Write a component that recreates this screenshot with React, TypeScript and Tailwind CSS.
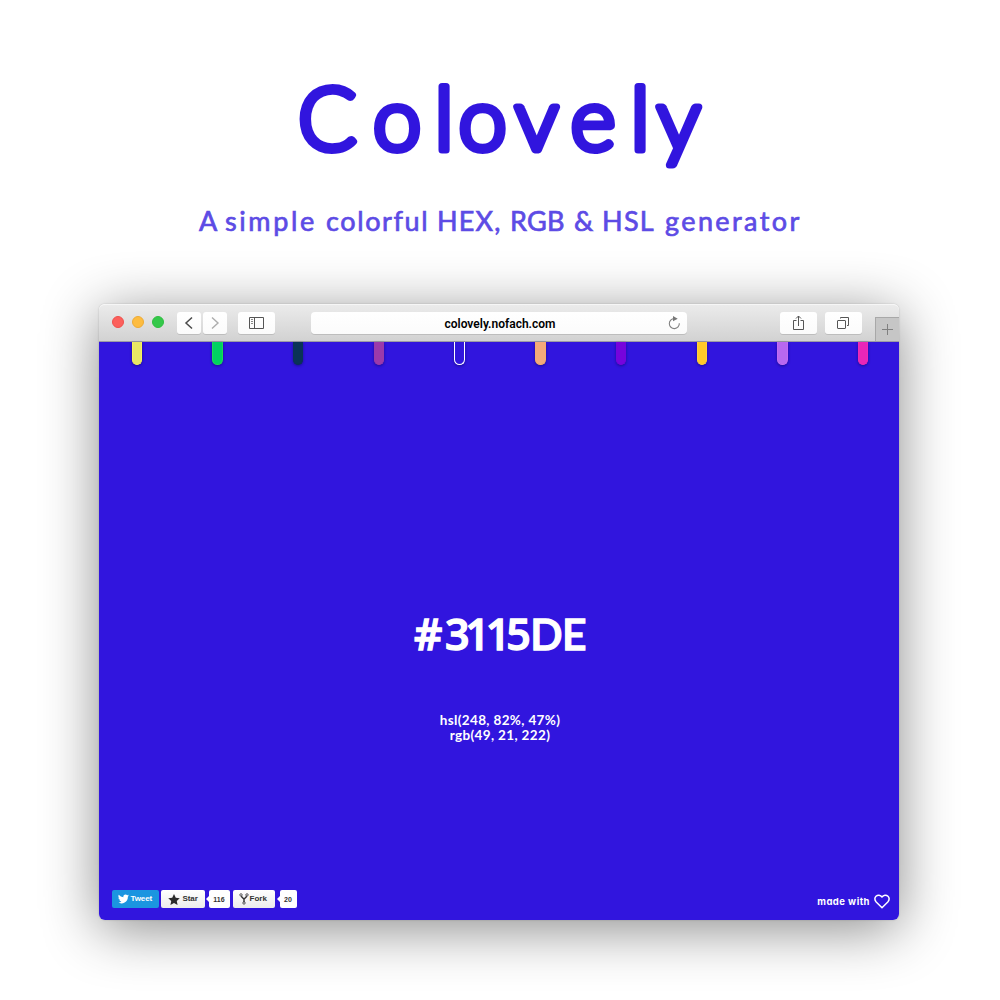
import React from "react";

const swatches = [
  "bg-[#e8e665] border-[#f5f35c]",
  "bg-[#00d261] border-[#1bdc55]",
  "bg-[#0a3357] border-[#0a3357]",
  "bg-[#9b3aaa] border-[#9b3aaa]",
  "bg-transparent border-white",
  "bg-[#f3a97c] border-[#f8ab6c]",
  "bg-[#7604dc] border-[#7604dc]",
  "bg-[#ffc928] border-[#ffcf3c]",
  "bg-[#b768f0] border-[#c36cf3]",
  "bg-[#e926b8] border-[#f02ab5]",
];

const tagline = [
  { word: "A", box: "w-[26px]", spacing: "tracking-[1px]" },
  { word: "simple", box: "w-[101px]", spacing: "tracking-[2.6px]" },
  { word: "colorful", box: "w-[111px]", spacing: "tracking-[1.6px]" },
  { word: "HEX,", box: "w-[73px]", spacing: "tracking-[1.2px]" },
  { word: "RGB", box: "w-[64px]", spacing: "tracking-[0.3px]" },
  { word: "&", box: "w-[28px]", spacing: "tracking-[0px]" },
  { word: "HSL", box: "w-[63px]", spacing: "tracking-[1.3px]" },
  { word: "generator", box: "w-[140px]", spacing: "tracking-[2.4px]" },
];

const button =
  "flex h-[22px] items-center justify-center rounded-[3px] bg-gradient-to-b from-white to-[#fbfbfb] shadow-[0_1px_0_#bdbdbd]";

function Wordmark() {
  return (
    <svg
      width="440"
      height="130"
      viewBox="280 55 440 130"
      role="img"
      aria-label="Colovely"
      className="overflow-visible"
      fill="#3115de"
      stroke="#3115de"
      strokeWidth="7"
      strokeLinejoin="round"
      strokeLinecap="round"
      fontFamily="Lato, sans-serif"
      fontWeight="300"
      fontSize="86.5"
    >
      <text y="149.5" x="298 373 434.5 458.5 515 570.5 630.5 657">
        Colovely
      </text>
    </svg>
  );
}

function Toolbar() {
  return (
    <div className="flex h-[38px] items-start rounded-t-[6px] border-b border-[#9c9ca4] border-t border-t-[#f6f6f6] bg-gradient-to-b from-[#ebebeb] to-[#d2d2d2] text-[#555]">
      <div className="ml-[13px] mt-[11px] flex gap-2">
        <span className="size-3 rounded-full border border-[#f0504c] bg-[#fc605c]" />
        <span className="size-3 rounded-full border border-[#eeab35] bg-[#fdbc40]" />
        <span className="size-3 rounded-full border border-[#2fbe40] bg-[#34c84a]" />
      </div>
      <div className="ml-[13px] mt-[7px] flex gap-[2px]">
        <div className={`${button} w-6`}>
          <svg width="10" height="14" viewBox="0 0 10 14" fill="none" stroke="#4a4a4a" strokeWidth="1.5">
            <path d="M8 1.5L2 7L8 12.5" />
          </svg>
        </div>
        <div className={`${button} w-6`}>
          <svg width="10" height="14" viewBox="0 0 10 14" fill="none" stroke="#adadad" strokeWidth="1.4">
            <path d="M2 1.5L8 7L2 12.5" />
          </svg>
        </div>
      </div>
      <div className={`${button} ml-[11px] mt-[7px] w-[37px]`}>
        <svg width="15" height="12" viewBox="0 0 15 12" fill="none" stroke="#555" className="mr-px">
          <path d="M.5.5h14v11H.5zM5.5.5v11" />
          <path d="M2 2.5h2M2 4.5h2M2 6.5h2" stroke="#888" />
        </svg>
      </div>
      <div className={`${button} relative ml-9 mt-[7px] w-[376px] rounded-[4px]`}>
        <span className="pl-[2px] pt-[2px] font-[Roboto,sans-serif] text-[12px] font-semibold leading-none text-black">
          colovely.nofach.com
        </span>
        <svg width="13" height="14" viewBox="0 0 13 14" fill="none" stroke="#828282" className="absolute right-[6px] top-[4px]">
          <path d="M6.3 2.6A5 5 0 1 0 11.3 7.2" strokeWidth="1.1" />
          <path d="M5 0L9.7 2.7L5 5.2z" fill="#777" stroke="none" />
        </svg>
      </div>
      <div className={`${button} ml-[93px] mt-[7px] w-[37px]`}>
        <svg width="11" height="16" viewBox="0 0 11 16" fill="none" stroke="#555" className="mb-px">
          <path d="M3.5 5.5h-3v9h10v-9h-3M5.5 11V1M3 3.5L5.5 1L8 3.5" />
        </svg>
      </div>
      <div className={`${button} ml-2 mt-[7px] w-[37px]`}>
        <svg width="12" height="12" viewBox="0 0 12 12" fill="none" stroke="#555" className="mr-px">
          <rect x=".5" y="3.5" width="8" height="8" rx=".5" />
          <path d="M3.5 1.5v-1h8v8h-1.5" />
        </svg>
      </div>
      <div className="ml-[13px] mt-3 flex h-6 flex-1 items-center justify-center border-l border-t border-[#a8a8a8] bg-[#c6c6c6]">
        <svg width="11" height="11" viewBox="0 0 11 11" stroke="#808080">
          <path d="M5.5 0v11M0 5.5h11" />
        </svg>
      </div>
    </div>
  );
}

function Count({ value, width }: { value: string; width: string }) {
  return (
    <div className={`relative flex h-[18px] items-center justify-center rounded-[2px] bg-white text-[7px] text-[#333] ${width}`}>
      <span className="absolute -left-[3px] top-[6px] border-y-[3px] border-r-[3px] border-y-transparent border-r-white" />
      {value}
    </div>
  );
}

function SocialButtons() {
  return (
    <div className="flex items-start font-['Liberation_Sans',sans-serif] text-[8px] font-bold leading-none text-[#333]">
      <div className="flex h-[18px] w-[47px] items-center rounded-[2px] bg-[#1b95e0] pl-[6px] text-white">
        <svg width="11" height="10" viewBox="0 0 24 20" fill="white" className="mr-[2px]">
          <path d="M24 2.4a9.8 9.8 0 0 1-2.8.8A5 5 0 0 0 23.3.5a10 10 0 0 1-3.1 1.2A4.9 4.9 0 0 0 11.8 6.2 14 14 0 0 1 1.7.9a4.9 4.9 0 0 0 1.5 6.6A4.9 4.9 0 0 1 1 6.9a4.9 4.9 0 0 0 4 4.9 5 5 0 0 1-2.2.1 4.9 4.9 0 0 0 4.6 3.4A9.9 9.9 0 0 1 0 17.3 14 14 0 0 0 21.5 4.9 10 10 0 0 0 24 2.4z" />
        </svg>
        <span className="tracking-[-0.1px]">Tweet</span>
      </div>
      <div className="ml-[2.5px] flex h-[18px] w-[43.5px] items-center rounded-[2px] bg-gradient-to-b from-white to-[#ececec] pl-[6.5px]">
        <svg width="12" height="11" viewBox="0 0 24 23" fill="#2b2b2b" className="mr-[3px]">
          <path d="M12 0l3.7 8 8.3.9-6.2 5.6L19.5 23 12 18.6 4.5 23l1.7-8.5L0 8.9 8.3 8z" />
        </svg>
        <span className="tracking-[-0.1px]">Star</span>
      </div>
      <div className="ml-[4px]">
        <Count value="116" width="w-[21px]" />
      </div>
      <div className="ml-[3px] flex h-[18px] w-[42px] items-center rounded-[2px] bg-gradient-to-b from-white to-[#ececec] pl-[6px]">
        <svg width="10" height="12" viewBox="0 0 10 12" fill="none" stroke="#333" className="mr-px">
          <circle cx="2" cy="1.9" r="1.2" strokeWidth=".8" />
          <circle cx="8" cy="1.9" r="1.2" strokeWidth=".8" />
          <circle cx="5" cy="10" r="1.2" strokeWidth=".8" />
          <path d="M2.2 3.2L5 6.3L7.8 3.2M5 6v3" strokeWidth="1.4" />
        </svg>
        Fork
      </div>
      <div className="ml-[5px]">
        <Count value="20" width="w-[17px]" />
      </div>
    </div>
  );
}

export default function App() {
  return (
    <main className="h-[1000px] w-[1000px] overflow-hidden bg-white font-[Lato,sans-serif]">
      <header className="flex h-[304px] flex-col items-center pt-[55px]">
        <h1>
          <Wordmark />
        </h1>
        <p className="ml-[4px] mt-[20px] flex w-[606px] text-[27px] font-normal leading-8 text-[#5d4be5] [-webkit-text-stroke:0.7px_#5d4be5]">
          {tagline.map(({ word, box, spacing }) => (
            <span key={word} className={`${box} ${spacing} shrink-0 whitespace-nowrap`}>
              {word}
            </span>
          ))}
        </p>
      </header>

      <section className="ml-[99px] h-[616px] w-[800px] rounded-[6px] shadow-[0_9px_56px_rgba(0,0,0,0.46),0_0_2px_rgba(0,0,0,0.2)]">
        <div className="flex h-full flex-col text-white">
          <Toolbar />
          <div className="flex flex-1 flex-col rounded-b-[6px] bg-[#3115de]">
            <div className="flex justify-between pl-[32.5px] pr-[30.5px]">
              {swatches.map((colors) => (
                <span
                  key={colors}
                  className={`h-[23px] w-[10.5px] rounded-b-[5.5px] border border-t-0 shadow-[0_1px_3px_rgba(0,0,60,0.45)] ${colors}`}
                />
              ))}
            </div>
            <div className="flex flex-1 flex-col items-center pt-[241px]">
              <h2 className="flex w-[174px] items-baseline text-[42.5px] font-semibold leading-[54px] [-webkit-text-stroke:1.3px_white]">
                <span className="w-[34px] pl-[2px] font-['Open_Sans',sans-serif] text-[44px] leading-[54px]">#</span>
                <span className="w-[88px] font-['Open_Sans',sans-serif] text-[43px] leading-[54px] tracking-[-4.2px]">3115</span>
                <span className="tracking-[-0.5px]">DE</span>
              </h2>
              <div className="mt-[52px] pl-[2px] text-center text-[13.5px] font-bold leading-[15px] tracking-[0.35px]">
                <p>hsl(248, 82%, 47%)</p>
                <p>rgb(49, 21, 222)</p>
              </div>
            </div>
            <footer className="flex items-start justify-between pb-[11px] pl-[12.5px] pr-[9px]">
              <SocialButtons />
              <div className="mt-[4px] flex items-center gap-1 leading-none">
                <span className="font-[Inter,sans-serif] text-[9.5px] font-bold tracking-[0.45px] [font-feature-settings:'cv11']">
                  made with
                </span>
                <svg width="16" height="15" viewBox="0 0 16 15" fill="none" stroke="white" strokeWidth="1.5" strokeLinejoin="round">
                  <path d="M8 13.7L2.2 8C.3 6 .6 3.5 2 2.2 3.8.6 6.5.8 8 3 9.5.8 12.2.6 14 2.2 15.4 3.5 15.7 6 13.8 8z" />
                </svg>
              </div>
            </footer>
          </div>
        </div>
      </section>
    </main>
  );
}
